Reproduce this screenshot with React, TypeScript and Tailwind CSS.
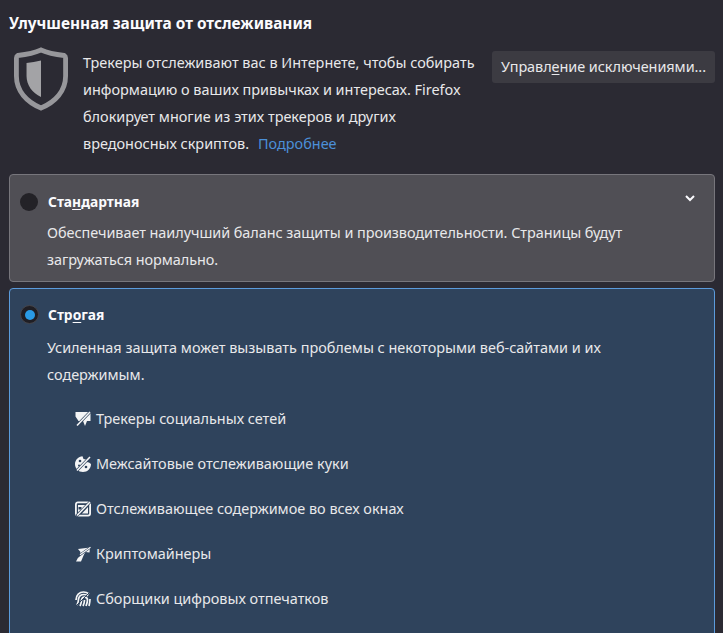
import React from 'react';

const font = 'font-["Noto_Sans",sans-serif]';

const Shield = () => (
	<svg width="54" height="64" viewBox="0 0 56 64" preserveAspectRatio="none" className="shrink-0">
		<path
			d="M28 3 C35 6 43 7.500 52 8.500 C53 9 53.500 10 53.500 11 L53.500 29 C53.500 44 43 55 28 61 C13 55 2.500 44 2.500 29 L2.500 11 C2.500 10 3 9 4 8.500 C13 7.500 21 6 28 3 Z"
			fill="none"
			stroke="#97979b"
			strokeWidth="5"
		/>
		<path d="M28 13.500 L28 50 C19 46 13 38 13 29 L13 16 C18 15.500 23 14.800 28 13.500 Z" fill="#a3a3a6" />
	</svg>
);

const Slash = () => (
	<>
		<path d="M15.500 .5 L1.500 15" stroke="#2f435c" strokeWidth="2.800" fill="none" />
		<path d="M15 1 L2 14.500" stroke="#f4f5f6" strokeWidth="1.600" fill="none" />
	</>
);

const SocialIcon = () => (
	<svg width="16" height="16" viewBox="0 0 16 16" fill="#f4f5f6">
		<path d="M.5 1 H15.500 V10 H12 L10 15 L8 10 H3.500 L.5 5.500 Z" />
		<Slash />
	</svg>
);

const CookieIcon = () => (
	<svg width="16" height="16" viewBox="0 0 16 16" fill="#f4f5f6">
		<path d="M7.500 .2 L8.500 3 L11 3.500 L11.500 6 L14 6.500 L16 8 C16 12.500 12.500 16 8 16 C3.500 16 0 12.500 0 8 C0 4 3.500 .2 7.500 .2 Z" />
		<circle cx="5" cy="5" r="1.300" fill="#2f435c" />
		<circle cx="4" cy="9.500" r="1" fill="#2f435c" />
		<circle cx="11" cy="11" r="1.300" fill="#2f435c" />
		<Slash />
	</svg>
);

const WindowsIcon = () => (
	<svg width="16" height="16" viewBox="0 0 16 16" fill="none">
		<rect x=".9" y="1.400" width="14.200" height="13.200" rx="2" stroke="#f4f5f6" strokeWidth="1.800" />
		<path d="M3 4 H11.500 L3 11.500 Z" fill="#f4f5f6" />
		<path d="M13 6 V12.500 H7 Z" fill="#f4f5f6" />
		<path d="M3.500 6 H6.500 V8.500 H3.500 Z" fill="#2f435c" />
		<Slash />
	</svg>
);

const MinerIcon = () => (
	<svg width="16" height="16" viewBox="0 0 16 16" fill="#f4f5f6">
		<path d="M3 3 L15 1.500 L14.500 6.500 L10.500 6 L9 8.500 L6 15.500 H1 L5 8 L5.500 6 Z" />
		<path d="M16 1 L2 11" stroke="#2f435c" strokeWidth="2.200" fill="none" />
		<path d="M15.500 1.200 L5 8.700" stroke="#f4f5f6" strokeWidth="1.300" fill="none" />
	</svg>
);

const FingerprintIcon = () => (
	<svg width="16" height="16" viewBox="0 0 16 16" fill="none" stroke="#f4f5f6" strokeWidth="1.700">
		<path d="M1 9 C1 4 4.500 1 8.500 1 C10.500 1 12.500 1.800 14 3" />
		<path d="M2 14 C3 12 3.500 10 3.500 8 C4 5 6.500 3.500 9 3.500 C10.500 3.500 12 4 13 5" />
		<path d="M5 15 C6 13 6.500 11 6.500 9 C7 7 8.500 6 10 6.200 C11.500 6.500 12.500 7.500 12.500 9 C12.500 11 11.800 13 11 15" />
		<path d="M8 15 C9 13 9.500 11 9.500 9" />
		<path d="M15 8 C15 10.500 14.500 13 14 15" />
		<path d="M15.500 .5 L1 15" stroke="#2f435c" strokeWidth="1" />
	</svg>
);

const items = [
	{ icon: <SocialIcon />, label: 'Трекеры социальных сетей' },
	{ icon: <CookieIcon />, label: 'Межсайтовые отслеживающие куки' },
	{ icon: <WindowsIcon />, label: 'Отслеживающее содержимое во всех окнах' },
	{ icon: <MinerIcon />, label: 'Криптомайнеры' },
	{ icon: <FingerprintIcon />, label: 'Сборщики цифровых отпечатков' },
];

const App = () => {
	return (
		<div className={`${font} w-[723px] h-[633px] overflow-hidden bg-[#2b2a33] text-[#fbfbfe] text-[14.45px] leading-[27px]`}>
			<div className="pl-[9px] pr-[8px] pt-[13px]">
				<h1 className="text-[15.4px] font-bold leading-[22px]">Улучшенная защита от отслеживания</h1>

				<div className="flex mt-[14px]">
					<div className="w-[74px] shrink-0 pl-[5px] -mt-[2px]">
						<Shield />
					</div>
					<p className="w-[409px] shrink-0 text-[#e8e8ea]">
						Трекеры отслеживают вас в Интернете, чтобы собирать
						<br />
						информацию о ваших привычках и интересах. Firefox
						<br />
						блокирует многие из этих трекеров и других
						<br />
						вредоносных скриптов.
						<a className="ml-[9px] text-[#4b8fd8]">Подробнее</a>
					</p>
					<button className="w-[223px] h-[32px] mt-[2px] rounded-[3px] bg-[#3c3b42] text-center leading-[32px] text-[#e8e8ea] whitespace-nowrap tracking-[-0.05px]">
						Управл<span className="underline underline-offset-2">е</span>ние исключениями...
					</button>
				</div>

				<section className="relative mt-[17px] h-[108px] rounded-[4px] border border-[#77767c] bg-[#504f55] pl-[37px] pt-[13px]">
					<div className="flex items-center">
						<span className="mr-[10px] -ml-[27px] h-[18px] w-[18px] rounded-full bg-[#232227]" />
						<span className="font-bold text-[13.8px] leading-[27px]">
							Ста<span className="underline underline-offset-2">н</span>дартная
						</span>
					</div>
					<p className="mt-[4px] text-[#e8e8ea] tracking-[-0.05px]">
						Обеспечивает наилучший баланс защиты и производительности. Страницы будут
						<br />
						загружаться нормально.
					</p>
					<svg width="10" height="7" viewBox="0 0 10 7" className="absolute right-[19px] top-[20px]" fill="none" stroke="#fbfbfe" strokeWidth="2">
						<path d="M1 1 L5 5 L9 1" />
					</svg>
				</section>

				<section className="mt-[6px] h-[360px] rounded-[4px] border border-[#5b9bdc] bg-[#2f435c] pl-[37px] pt-[12px]">
					<div className="flex items-center">
						<span className="mr-[9px] -ml-[27px] flex h-[19px] w-[19px] items-center justify-center rounded-full border-[1px] border-[#45454b] bg-[#1f1e24]">
							<span className="h-[10px] w-[10px] rounded-full bg-[#2a9ae4]" />
						</span>
						<span className="font-bold text-[13.8px] leading-[27px]">
							Стр<span className="underline underline-offset-2">о</span>гая
						</span>
					</div>
					<p className="mt-[6px] text-[#e8e8ea]">
						Усиленная защита может вызывать проблемы с некоторыми веб-сайтами и их
						<br />
						содержимым.
					</p>
					<ul className="mt-[17px] pl-[28px] flex flex-col gap-[18px]">
						{items.map((item) => (
							<li key={item.label} className="flex items-center gap-[5px] text-[#e8e8ea]">
								{item.icon}
								<span>{item.label}</span>
							</li>
						))}
					</ul>
				</section>
			</div>
		</div>
	);
};

export default App;
